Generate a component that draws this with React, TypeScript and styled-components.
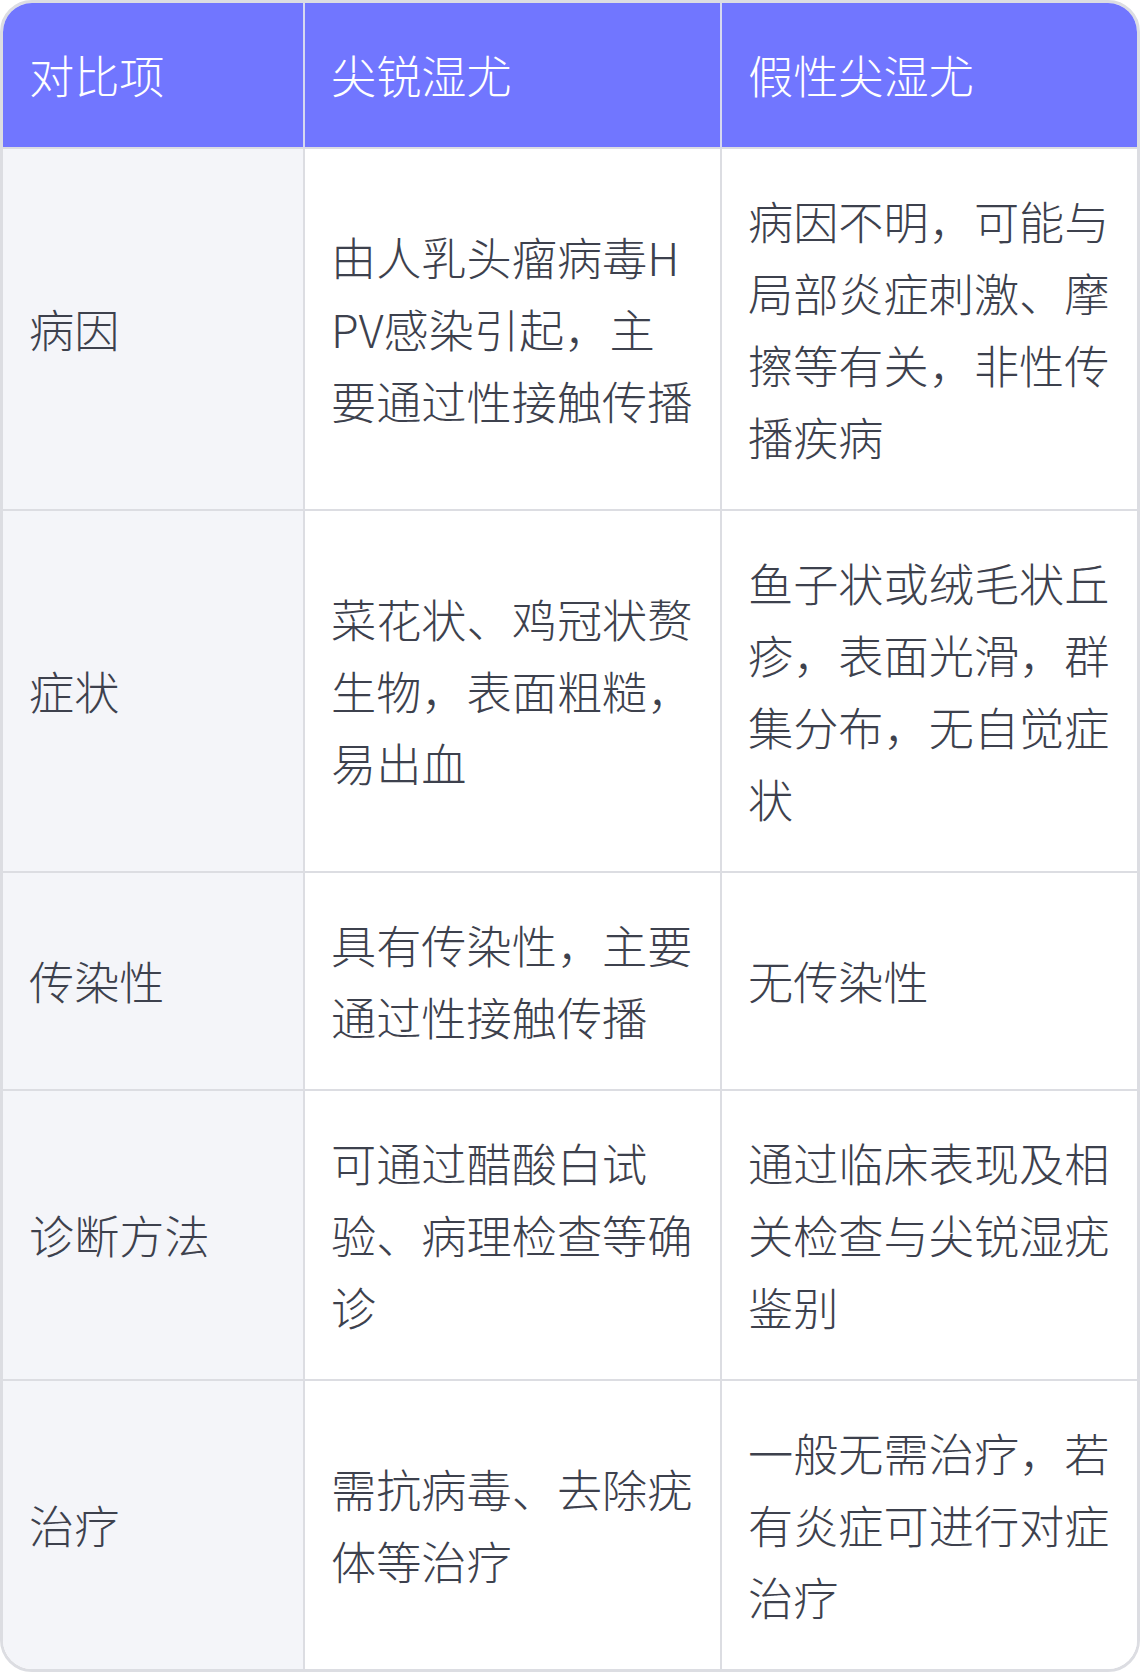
import styled, { createGlobalStyle } from "styled-components";

const GlobalStyle = createGlobalStyle`
  html, body {
    margin: 0;
    padding: 0;
    background: #ffffff;
  }
  body {
    font-family: "Noto Sans CJK SC", "Noto Sans", sans-serif;
  }
`;

const TableFrame = styled.div`
  width: 1140px;
  box-sizing: border-box;
  border: 3px solid #dcdde2;
  border-radius: 32px;
  overflow: hidden;
  display: grid;
  grid-template-columns: 302px 417px 415px;
`;

const Cell = styled.div<{ $head?: boolean; $first?: boolean; $last?: boolean; $bottom?: boolean }>`
  display: flex;
  align-items: center;
  box-sizing: border-box;
  padding: 36px 24px 36px 26px;
  font-size: 45.2px;
  line-height: 72px;
  font-weight: 300;
  word-break: break-all;
  color: ${(p) => (p.$head ? "#ffffff" : "#3d414d")};
  background: ${(p) => (p.$head ? "#7176ff" : p.$first ? "#f4f5f9" : "#ffffff")};
  border-right: ${(p) => (p.$last ? "none" : p.$head ? "2px solid #d6d8f0" : "2px solid #dcdde2")};
  border-bottom: ${(p) => (p.$bottom ? "none" : "2px solid #dcdde2")};
`;

const head = ["对比项", "尖锐湿尤", "假性尖湿尤"];

const rows = [
  ["病因", "由人乳头瘤病毒HPV感染引起，主要通过性接触传播", "病因不明，可能与局部炎症刺激、摩擦等有关，非性传播疾病"],
  ["症状", "菜花状、鸡冠状赘生物，表面粗糙，易出血", "鱼子状或绒毛状丘疹，表面光滑，群集分布，无自觉症状"],
  ["传染性", "具有传染性，主要通过性接触传播", "无传染性"],
  ["诊断方法", "可通过醋酸白试验、病理检查等确诊", "通过临床表现及相关检查与尖锐湿疣鉴别"],
  ["治疗", "需抗病毒、去除疣体等治疗", "一般无需治疗，若有炎症可进行对症治疗"],
];

export default function App() {
  return (
    <>
      <GlobalStyle />
      <TableFrame>
        {head.map((h, i) => (
          <Cell key={h} $head $last={i === 2}>
            {h}
          </Cell>
        ))}
        {rows.map((row, r) =>
          row.map((text, c) => (
            <Cell
              key={r + "-" + c}
              $first={c === 0}
              $last={c === 2}
              $bottom={r === rows.length - 1}
            >
              {text}
            </Cell>
          ))
        )}
      </TableFrame>
    </>
  );
}
